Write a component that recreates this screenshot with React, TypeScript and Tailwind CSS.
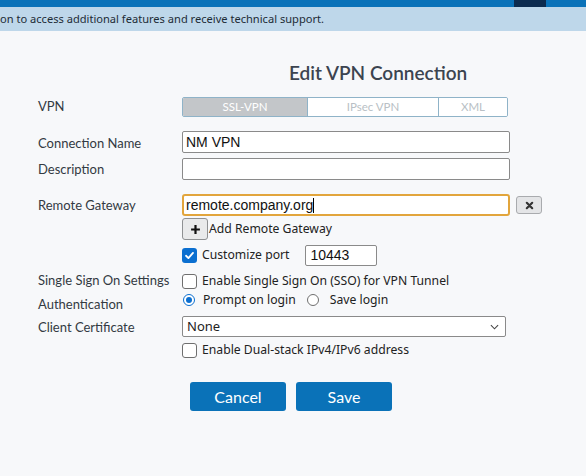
import React from 'react';

const lato = { fontFamily: 'Lato, "Noto Sans", sans-serif' };

function Label({ children, className = '' }: { children: React.ReactNode; className?: string }) {
  return (
    <div className={`w-[144px] shrink-0 text-[13px] text-[#333a42] font-['Lato',sans-serif] ${className}`}>
      {children}
    </div>
  );
}

function Box({ checked = false }: { checked?: boolean }) {
  if (checked) {
    return (
      <span className="w-[15px] h-[15px] rounded-[3px] bg-[#0b6fd0] flex items-center justify-center shrink-0">
        <svg viewBox="0 0 12 12" className="w-[11px] h-[11px]">
          <path d="M2.2 6.3 L4.8 8.8 L9.8 3.2" fill="none" stroke="white" strokeWidth={2} strokeLinecap="round" strokeLinejoin="round" />
        </svg>
      </span>
    );
  }
  return <span className="w-[15px] h-[15px] rounded-[3px] border border-[#6f6f6f] bg-white shrink-0" />;
}

function Radio({ checked = false }: { checked?: boolean }) {
  return (
    <span
      className={`w-[12px] h-[12px] rounded-full border flex items-center justify-center bg-white shrink-0 ${
        checked ? 'border-[#0b6fd0]' : 'border-[#6f6f6f]'
      }`}
    >
      {checked && <span className="w-[6px] h-[6px] rounded-full bg-[#0b6fd0]" />}
    </span>
  );
}

const ctl = "font-['Noto_Sans',sans-serif] text-[12.2px] text-[#222]";

export default function App() {
  return (
    <div className="w-[586px] h-[476px] bg-[#f7f8fa] overflow-hidden relative">
      {/* top bar */}
      <div className="h-[7px] bg-[#0a72b9] flex">
        <div className="w-[514px]" />
        <div className="w-[32px] bg-[#0c2b4f]" />
      </div>
      {/* notice banner */}
      <div className="h-[24px] bg-[#bed7ea] flex items-center">
        <span className="text-[11.1px] text-[#1d2b36] font-['Noto_Sans',sans-serif]">
          on to access additional features and receive technical support.
        </span>
      </div>

      <div className="pl-[38px]">
        <div className="pl-[251px] mt-[31px] h-[22px] leading-[22px] text-[19px] font-semibold text-[#3c4450]" style={lato}>
          Edit VPN Connection
        </div>

        {/* VPN type */}
        <div className="flex items-center mt-[13px] h-[20px]">
          <Label>VPN</Label>
          <div className="flex h-[20px] w-[326px] border border-[#8fb3c8] rounded-[2px] text-[11.5px] overflow-hidden" style={lato}>
            <div className="w-[124px] bg-[#c3c6c9] text-white flex items-center justify-center">SSL-VPN</div>
            <div className="w-[131px] bg-white text-[#b9bfc5] border-l border-[#8fb3c8] flex items-center justify-center">IPsec VPN</div>
            <div className="flex-1 bg-white text-[#b9bfc5] border-l border-[#8fb3c8] flex items-center justify-center">XML</div>
          </div>
        </div>

        {/* Connection name */}
        <div className="flex items-center mt-[14px] h-[22px]">
          <Label className="pt-[3px]">Connection Name</Label>
          <div className="w-[328px] h-[22px] bg-white border border-[#8a8a8a] rounded-[2px] px-[3px] flex items-center text-[14px] text-[#111] font-['Liberation_Sans',Arial,sans-serif]">
            NM VPN
          </div>
        </div>

        {/* Description */}
        <div className="flex items-center mt-[5px] h-[22px]">
          <Label className="pt-[2px]">Description</Label>
          <div className="w-[328px] h-[22px] bg-white border border-[#8a8a8a] rounded-[2px]" />
        </div>

        {/* Remote gateway */}
        <div className="flex items-center mt-[14px] h-[22px]">
          <Label className="pt-[1px]">Remote Gateway</Label>
          <div className="w-[328px] h-[22px] bg-white border-2 border-[#e2a53c] rounded-[3px] px-[2px] flex items-center text-[14px] text-[#111] font-['Liberation_Sans',Arial,sans-serif]">
            remote.company.org<span className="w-px h-[15px] bg-black" />
          </div>
          <button className="ml-[6px] w-[26px] h-[18px] bg-[#e4e5e7] border border-[#a9abae] rounded-[3px] flex items-center justify-center">
            <svg viewBox="0 0 10 10" className="w-[9px] h-[9px]">
              <path d="M2 2 L8 8 M8 2 L2 8" stroke="#333" strokeWidth={2.4} strokeLinecap="round" />
            </svg>
          </button>
        </div>

        <div className="flex items-center mt-[2px] h-[22px] pl-[144px]">
          <button className="w-[26px] h-[22px] bg-[#e9eaeb] border border-[#8f9193] rounded-[3px] flex items-center justify-center">
            <svg viewBox="0 0 10 10" className="w-[11px] h-[11px]">
              <path d="M5 1 V9 M1 5 H9" stroke="#111" strokeWidth={2} />
            </svg>
          </button>
          <span className={`${ctl} ml-[1px]`}>Add Remote Gateway</span>
        </div>

        <div className="flex items-center mt-[4px] h-[22px] pl-[144px]">
          <Box checked />
          <span className={`${ctl} ml-[5px]`}>Customize port</span>
          <div className="ml-[16px] w-[72px] h-[21px] bg-white border border-[#8a8a8a] rounded-[2px] px-[4px] flex items-center text-[14px] text-[#111] font-['Liberation_Sans',Arial,sans-serif]">
            10443
          </div>
        </div>

        {/* SSO */}
        <div className="flex items-center mt-[6px] h-[18px]">
          <Label>Single Sign On Settings</Label>
          <Box />
          <span className={`${ctl} ml-[5px]`}>Enable Single Sign On (SSO) for VPN Tunnel</span>
        </div>

        {/* Authentication */}
        <div className="flex items-center h-[20px]">
          <Label className="pt-[10px]">Authentication</Label>
          <span className="ml-[1px]"><Radio checked /></span>
          <span className={`${ctl} ml-[8px]`}>Prompt on login</span>
          <span className="ml-[11px]"><Radio /></span>
          <span className={`${ctl} ml-[11px]`}>Save login</span>
        </div>

        {/* Client certificate */}
        <div className="flex items-center mt-[6px] h-[21px]">
          <Label className="pt-[3px]">Client Certificate</Label>
          <div className="w-[324px] h-[21px] bg-white border border-[#8a8a8a] rounded-[2px] pl-[4px] pr-[6px] flex items-center justify-between">
            <span className={`${ctl} text-[13px]`}>None</span>
            <svg viewBox="0 0 10 6" className="w-[9px] h-[6px]">
              <path d="M1 1 L5 5 L9 1" fill="none" stroke="#444" strokeWidth={1.2} />
            </svg>
          </div>
        </div>

        <div className="flex items-center mt-[5px] h-[16px] pl-[144px]">
          <Box />
          <span className={`${ctl} ml-[5px]`}>Enable Dual-stack IPv4/IPv6 address</span>
        </div>

        {/* actions */}
        <div className="flex mt-[24px] pl-[152px] gap-[10px]">
          <button className="w-[96px] h-[29px] bg-[#0a72b8] rounded-[3px] text-white text-[16px]" style={lato}>
            Cancel
          </button>
          <button className="w-[96px] h-[29px] bg-[#0a72b8] rounded-[3px] text-white text-[16px]" style={lato}>
            Save
          </button>
        </div>
      </div>
    </div>
  );
}
